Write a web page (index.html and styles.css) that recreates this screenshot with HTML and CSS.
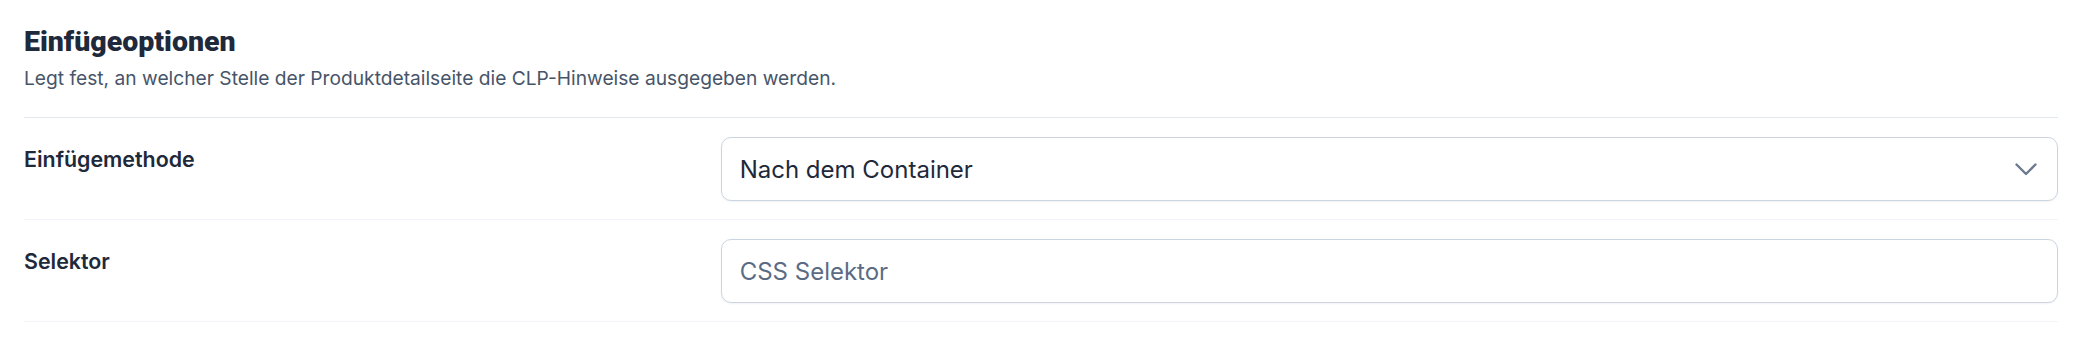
FILE: index.html
```html
<!DOCTYPE html>
<html lang="de">
<head>
<meta charset="utf-8">
<link rel="stylesheet" href="styles.css">
</head>
<body>
<section class="panel">
  <header class="panel-head">
    <h2 class="title">Einfügeoptionen</h2>
    <p class="desc">Legt fest, an welcher Stelle der Produktdetailseite die CLP-Hinweise ausgegeben werden.</p>
  </header>
  <div class="row">
    <label class="label" for="method">Einfügemethode</label>
    <div class="control">
      <div class="select" id="method">
        <span class="select-value">Nach dem Container</span>
        <svg class="chevron" width="22" height="13" viewBox="0 0 22 13" fill="none"><path d="M1.5 1.5 L11 11 L20.5 1.5" stroke="#6b7a90" stroke-width="2.4" stroke-linecap="round" stroke-linejoin="round"/></svg>
      </div>
    </div>
  </div>
  <div class="row">
    <label class="label" for="sel">Selektor</label>
    <div class="control">
      <input class="input" id="sel" type="text" placeholder="CSS Selektor">
    </div>
  </div>
</section>
</body>
</html>
```
FILE: styles.css
```css
* { box-sizing: border-box; }
html, body { margin: 0; background: #ffffff; }
body { font-family: Inter, "Noto Sans", sans-serif; color: #1e293b; }
.panel { padding: 0 24px; }
.panel-head { padding-top: 24px; padding-bottom: 25px; border-bottom: 1px solid #e2e8f0; }
.title { margin: 0; font-family: Roboto, "Liberation Sans", sans-serif; font-weight: 900; font-stretch: 95%; font-size: 28.5px; line-height: 36px; color: #1e293b; }
.desc { margin: 4px 0 0; font-size: 19.2px; line-height: 28px; color: #475569; }
.row { display: grid; grid-template-columns: 1fr 2fr; column-gap: 28px; padding: 19px 0 18px; border-bottom: 1px solid #f1f5f9; }
.label { padding-top: 6px; font-size: 21.4px; font-weight: 600; line-height: 32px; color: #1e293b; }
.select, .input { width: 100%; height: 64px; border: 1px solid #cbd5e1; border-radius: 10px; background: #fff; box-shadow: 0 1px 2px rgba(15, 23, 42, 0.05); }
.select { display: flex; align-items: center; justify-content: space-between; padding: 0 20px 0 18px; }
.select-value { font-size: 24px; color: #1e293b; }
.input { display: block; padding: 0 18px; font-family: Inter, "Noto Sans", sans-serif; font-size: 24px; color: #1e293b; outline: none; }
.input::placeholder { color: #5b6b84; }
```
